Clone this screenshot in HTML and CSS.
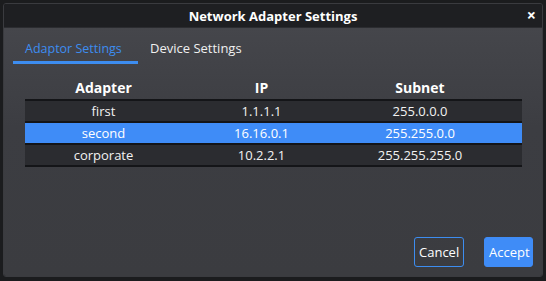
FILE: index.html
```html
<!DOCTYPE html>
<html lang="en">
<head>
    <meta charset="UTF-8">
    <title>Network Adapter Settings</title>
    <link rel="stylesheet" href="styles.css">
</head>
<body>

<div class="dialog">
    <div class="titlebar">
        <span class="title">Network Adapter Settings</span>
        <span class="close">&times;</span>
    </div>

    <div class="content">
        <div class="tabs">
            <div class="tab active">Adaptor Settings</div>
            <div class="tab">Device Settings</div>
        </div>

        <div class="table">
            <div class="row head">
                <div>Adapter</div>
                <div>IP</div>
                <div class="last">Subnet</div>
            </div>
            <div class="row">
                <div>first</div>
                <div>1.1.1.1</div>
                <div class="last">255.0.0.0</div>
            </div>
            <div class="row selected">
                <div>second</div>
                <div>16.16.0.1</div>
                <div class="last">255.255.0.0</div>
            </div>
            <div class="row">
                <div>corporate</div>
                <div>10.2.2.1</div>
                <div class="last">255.255.255.0</div>
            </div>
        </div>

        <div class="buttons">
            <button class="btn cancel">Cancel</button>
            <button class="btn accept">Accept</button>
        </div>
    </div>
</div>

</body>
</html>
```

FILE: styles.css
```css
html, body {
    margin: 0;
    padding: 0;
    background-color: #1b1c1e;
    font-family: "Open Sans", "Noto Sans", sans-serif;
    font-size: 13px;
    color: #f2f2f2;
}
.dialog {
    margin: 3px;
    width: 538px;
    height: 272px;
    border: 1px solid #3a3b3f;
    border-radius: 3px;
    display: flex;
    flex-direction: column;
    overflow: hidden;
}
.titlebar {
    height: 23px;
    background-color: #1e1f22;
    display: flex;
    align-items: center;
    justify-content: center;
    position: relative;
    border-bottom: 1px solid #2b2c30;
}
.title {
    font-weight: bold;
    font-size: 13px;
    color: #ffffff;
}
.close {
    position: absolute;
    right: 6px;
    top: 1px;
    font-weight: bold;
    font-size: 16px;
    line-height: 20px;
    color: #ffffff;
}
.content {
    flex: 1;
    background: linear-gradient(#45464b, #3c3d42 40%, #3b3c40);
    display: flex;
    flex-direction: column;
    padding: 0 9px;
}
.tabs {
    display: flex;
    margin-top: 9px;
    height: 27px;
}
.tab {
    padding: 0 12px;
    line-height: 23px;
    font-size: 13px;
    color: #f0f0f0;
}
.tab.active {
    width: 101px;
    color: #3d8df0;
    font-size: 12.5px;
    border-bottom: 3px solid #3d8df0;
}
.table {
    margin: 13px 11px 0 12px;
}
.row {
    display: grid;
    grid-template-columns: 157px 159px 1fr;
    text-align: center;
    height: 20px;
    line-height: 20px;
    background-color: #2b2c30;
    border-bottom: 2px solid #141518;
}
.row .last {
    padding-right: 23px;
}
.row.head {
    background: none;
    font-weight: bold;
    font-size: 14px;
    color: #ffffff;
    height: 22px;
    line-height: 22px;
}
.row.selected {
    background-color: #3f8cf7;
    color: #ffffff;
}
.buttons {
    margin-top: auto;
    margin-bottom: 9px;
    display: flex;
    justify-content: flex-end;
    gap: 20px;
}
.btn {
    font-family: "Open Sans", "Noto Sans", sans-serif;
    font-size: 13px;
    height: 30px;
    padding: 0 4px;
    border-radius: 3px;
    color: #ffffff;
    cursor: pointer;
}
.cancel {
    width: 50px;
    background: transparent;
    border: 1px solid #3d8df0;
}
.accept {
    width: 49px;
    background-color: #3f8cf7;
    border: 1px solid #3f8cf7;
}
```
